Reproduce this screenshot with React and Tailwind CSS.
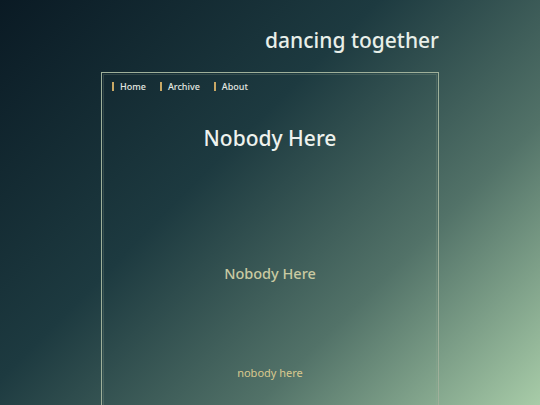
import React from 'react';

const links = ['Home', 'Archive', 'About'];

export default function App() {
    return (
        <div className="min-h-[405px] h-[405px] overflow-hidden bg-[linear-gradient(135deg,#0a1a24_0%,#1d3a40_40%,#527268_70%,#a8cca8_100%)] font-['Noto_Sans',sans-serif]">
            <div className="w-[338px] mx-auto">
                <header className="h-[72px] flex items-start justify-end pt-[25px]">
                    <h1 className="text-[21px] leading-[30px] text-[#e8efe9] font-medium">dancing together</h1>
                </header>
                <main className="border border-[#9fb09a] h-[360px] outline outline-1 outline-offset-[-3px] outline-[#9fb09a]/20">
                    <nav className="flex items-center gap-[14px] pl-[10px] pt-[1px] h-[26px] text-[9px] text-[#e4e8e2] font-medium">
                        {links.map((l) => (
                            <div key={l} className="flex items-center gap-[6px]">
                                <span className="w-[2px] h-[9px] bg-[#c9a865]"></span>
                                <span>{l}</span>
                            </div>
                        ))}
                    </nav>
                    <h2 className="text-center text-[21px] leading-[30px] mt-[24px] text-[#eef2ee] font-medium">Nobody Here</h2>
                    <h3 className="text-center text-[14.5px] leading-[20px] mt-[110px] text-[#c9caa2] font-medium">Nobody Here</h3>
                    <p className="text-center text-[11px] leading-[16px] mt-[82px] text-[#d9c98f]">nobody here</p>
                </main>
            </div>
        </div>
    );
}
